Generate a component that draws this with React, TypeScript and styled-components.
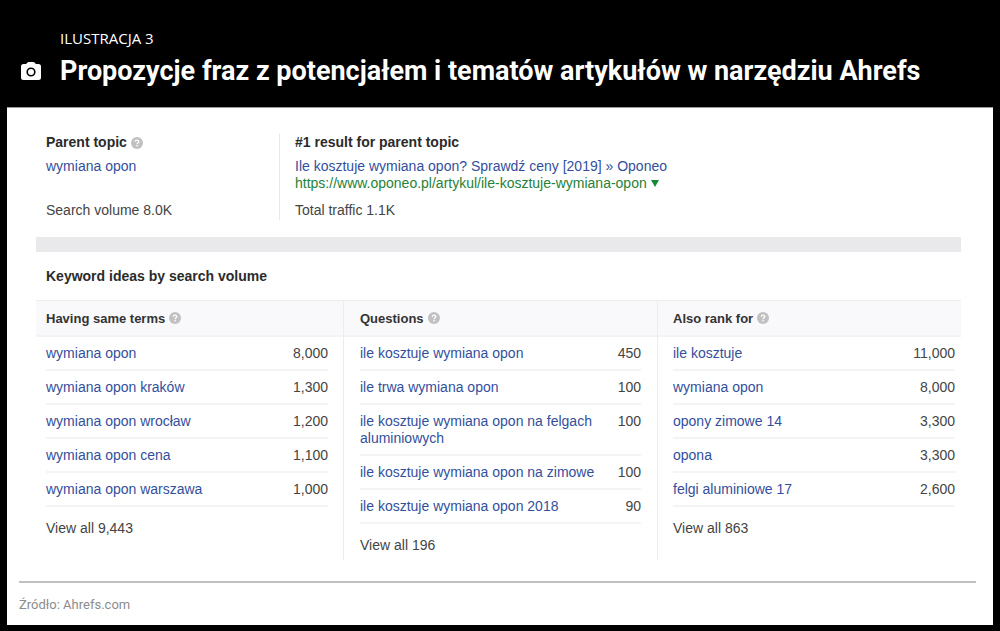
import React from "react";
import styled, { createGlobalStyle } from "styled-components";

const GlobalStyle = createGlobalStyle`
  *, *::before, *::after { box-sizing: border-box; }
  body {
    margin: 0;
    background: #000;
    color: #444;
    font: 14px/17px "Liberation Sans", Arial, sans-serif;
  }
  h1, h2, h3, p { margin: 0; }
`;

const Figure = styled.main`
  padding: 0 7px 6px;
`;

const Header = styled.header`
  display: grid;
  grid-template-columns: 39px 1fr;
  align-items: center;
  padding: 26px 14px 15px;
  color: #fff;
  font-family: Roboto, sans-serif;
`;

const Eyebrow = styled.p`
  grid-column: 2;
  font: 15px/24px "Open Sans", sans-serif;
`;

const Title = styled.h1`
  font-size: 27px;
  line-height: 42px;
  font-weight: 700;
  white-space: nowrap;
`;

const Card = styled.section`
  padding: 26px 32px 8px 29px;
  background: #fff;
  border-top: 1px solid #999;
`;

const Summary = styled.div`
  display: flex;
  padding-left: 10px;
`;

const SummaryItem = styled.div<{ $wide?: boolean }>`
  flex: ${(p) => (p.$wide ? "1" : "0 0 234px")};
  height: 86px;
  padding-left: ${(p) => (p.$wide ? "15px" : "0")};
  border-left: ${(p) => (p.$wide ? "1px solid #e8e8e8" : "0")};
  margin-left: ${(p) => (p.$wide ? "-1px" : "0")};
  display: flex;
  flex-direction: column;
`;

const Label = styled.h2`
  display: flex;
  align-items: center;
  gap: 4px;
  margin-bottom: 7px;
  color: #2b2b2b;
  font: inherit;
  font-weight: 700;
`;

const ColumnLabel = styled.h3`
  display: flex;
  align-items: center;
  gap: 4px;
  height: 37px;
  color: #333;
  font-size: 13px;
  font-weight: 700;
  background: #f9f9fb;
  border-top: 1px solid #eeeeef;
  border-bottom: 2px solid #f3f3f4;
`;

const Link = styled.a<{ $green?: boolean }>`
  color: ${(p) => (p.$green ? "#268237" : "#334f9c")};
  text-decoration: none;
`;

const Total = styled.p`
  margin-top: auto;
  padding-bottom: 1px;
`;

const Band = styled.div`
  height: 15px;
  margin: 17px 0 16px;
  background: #e9e9eb;
`;

const IdeasTitle = styled.h2`
  padding-left: 10px;
  margin-bottom: 15px;
  color: #2b2b2b;
  font: inherit;
  font-weight: 700;
`;

const Columns = styled.div`
  display: grid;
  grid-template-columns: 308fr 314fr 303fr;
`;

const Column = styled.section<{ $left: number; $right: number }>`
  min-height: 260px;
  border-right: 1px solid #ececec;

  &:last-child { border-right: 0; }

  ${ColumnLabel} { padding-left: ${(p) => p.$left}px; }
  > div { padding: 0 ${(p) => p.$right}px 0 ${(p) => p.$left}px; }
`;

const Table = styled.table`
  width: 100%;
  border-spacing: 0;
`;

const Term = styled.td`
  padding: 8px 8px 7px 0;
  border-bottom: 2px solid #f4f4f4;
`;

const Volume = styled.td`
  padding: 8px 0 7px;
  border-bottom: 2px solid #f4f4f4;
  text-align: right;
  vertical-align: top;
`;

const ViewAll = styled.p`
  padding-top: 13px;
`;

const Source = styled.footer`
  margin: 21px -15px 0 -17px;
  padding-top: 10px;
  border-top: 2px solid #c0c0c0;
  color: #8c8c8c;
  font: 13px/24px Roboto, sans-serif;
`;

const HelpIcon = () => (
  <svg width="12" height="12" viewBox="0 0 12 12" aria-hidden="true">
    <circle cx="6" cy="6" r="6" fill="#c1c1c1" />
    <path d="M4.3 4.7C4.3 2.5 7.8 2.5 7.8 4.6C7.8 5.8 6.1 5.8 6.1 7.2" fill="none" stroke="#fff" strokeWidth="1.3" />
    <rect x="5.4" y="8" width="1.4" height="1.4" fill="#fff" />
  </svg>
);

const Camera = () => (
  <svg width="20" height="18" viewBox="0 0 20 18" aria-hidden="true">
    <path
      d="M2.5 2H5L6.3 .7Q6.8 0 7.6 0H12.4Q13.2 0 13.7 .7L15 2H17.5Q20 2 20 4.5V15.5Q20 18 17.5 18H2.5Q0 18 0 15.5V4.5Q0 2 2.5 2Z"
      fill="#fff"
    />
    <circle cx="10" cy="10" r="3.8" fill="#fff" stroke="#000" strokeWidth="1.6" />
  </svg>
);

const Arrow = () => (
  <svg width="8" height="8" viewBox="0 0 8 8" aria-hidden="true">
    <path d="M0 0H8L4 7Z" fill="#148a35" />
  </svg>
);

const columns = [
  {
    title: "Having same terms",
    left: 10,
    right: 15,
    total: "9,443",
    rows: [
      ["wymiana opon", "8,000"],
      ["wymiana opon kraków", "1,300"],
      ["wymiana opon wrocław", "1,200"],
      ["wymiana opon cena", "1,100"],
      ["wymiana opon warszawa", "1,000"],
    ],
  },
  {
    title: "Questions",
    left: 16,
    right: 16,
    total: "196",
    rows: [
      ["ile kosztuje wymiana opon", "450"],
      ["ile trwa wymiana opon", "100"],
      ["ile kosztuje wymiana opon na felgach aluminiowych", "100"],
      ["ile kosztuje wymiana opon na zimowe", "100"],
      ["ile kosztuje wymiana opon 2018", "90"],
    ],
  },
  {
    title: "Also rank for",
    left: 15,
    right: 6,
    total: "863",
    rows: [
      ["ile kosztuje", "11,000"],
      ["wymiana opon", "8,000"],
      ["opony zimowe 14", "3,300"],
      ["opona", "3,300"],
      ["felgi aluminiowe 17", "2,600"],
    ],
  },
];

export default function App() {
  return (
    <Figure>
      <GlobalStyle />
      <Header>
        <Eyebrow>ILUSTRACJA 3</Eyebrow>
        <Camera />
        <Title>Propozycje fraz z potencjałem i tematów artykułów w narzędziu Ahrefs</Title>
      </Header>
      <Card>
        <Summary>
          <SummaryItem>
            <Label>
              Parent topic <HelpIcon />
            </Label>
            <Link href="#topic">wymiana opon</Link>
            <Total>Search volume 8.0K</Total>
          </SummaryItem>
          <SummaryItem $wide>
            <Label>#1 result for parent topic</Label>
            <Link href="#result">Ile kosztuje wymiana opon? Sprawdź ceny [2019] » Oponeo</Link>
            <Link $green href="https://www.oponeo.pl/artykul/ile-kosztuje-wymiana-opon">
              https://www.oponeo.pl/artykul/ile-kosztuje-wymiana-opon <Arrow />
            </Link>
            <Total>Total traffic 1.1K</Total>
          </SummaryItem>
        </Summary>
        <Band />
        <IdeasTitle>Keyword ideas by search volume</IdeasTitle>
        <Columns>
          {columns.map((column, index) => (
            <Column key={column.title} $left={column.left} $right={column.right}>
              <ColumnLabel id={`ideas-${index}`}>
                {column.title} <HelpIcon />
              </ColumnLabel>
              <div>
                <Table aria-labelledby={`ideas-${index}`}>
                  <tbody>
                    {column.rows.map(([term, volume]) => (
                      <tr key={term}>
                        <Term>
                          <Link href="#keyword">{term}</Link>
                        </Term>
                        <Volume>{volume}</Volume>
                      </tr>
                    ))}
                  </tbody>
                </Table>
                <ViewAll>View all {column.total}</ViewAll>
              </div>
            </Column>
          ))}
        </Columns>
        <Source>Źródło: Ahrefs.com</Source>
      </Card>
    </Figure>
  );
}
